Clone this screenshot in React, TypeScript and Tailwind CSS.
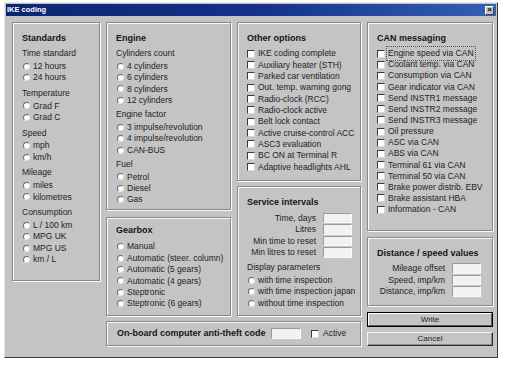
import React from 'react';

const font = "font-['Liberation_Sans',Arial,sans-serif]";

const GroupBox: React.FC<{ className?: string; title?: string; children?: React.ReactNode }> = ({ className = '', title, children }) => (
  <div className={`border border-[#8a8a8a] shadow-[inset_1px_1px_0_#fafafa,1px_1px_0_#fafafa] pl-[9px] ${className}`}>
    {title && <div className="font-bold text-[9px] leading-[11.5px] text-[#151515] mb-[3.5px]">{title}</div>}
    {children}
  </div>
);

const Radio: React.FC<{ label: string }> = ({ label }) => (
  <div className="flex items-center h-[11.4px] whitespace-nowrap">
    <span className="ml-[1px] w-[7px] h-[7px] rounded-full bg-white border border-t-[#6a6a6a] border-l-[#6a6a6a] border-r-[#e4e4e4] border-b-[#e4e4e4]" />
    <span className="ml-[3px]">{label}</span>
  </div>
);

const Check: React.FC<{ label: string; focus?: boolean; h: string }> = ({ label, focus, h }) => (
  <div className={`flex items-center ${h} whitespace-nowrap`}>
    <span className="w-[8px] h-[8px] bg-white border border-t-[#3a3a3a] border-l-[#3a3a3a] border-r-[#d8d8d8] border-b-[#d8d8d8]" />
    <span className={focus ? 'ml-[2px] px-[1px] outline outline-1 outline-dotted outline-[#555]' : 'ml-[3px]'}>{label}</span>
  </div>
);

const Label: React.FC<{ text: string; mt?: string }> = ({ text, mt = '' }) => (
  <div className={`h-[11.5px] leading-[11.5px] mb-[1px] whitespace-nowrap ${mt}`}>{text}</div>
);

const Input: React.FC<{ className?: string }> = ({ className = '' }) => (
  <span className={`block bg-[#f2f2f2] border border-t-[#9a9a9a] border-l-[#9a9a9a] border-r-[#fafafa] border-b-[#fafafa] ${className}`} />
);

const Field: React.FC<{ label: string; w: string }> = ({ label, w }) => (
  <div className="flex items-center h-[11.4px] whitespace-nowrap">
    <span className={`${w} text-right`}>{label}</span>
    <Input className="ml-[7px] w-[29px] h-[10.5px]" />
  </div>
);

const otherOptions = [
  'IKE coding complete',
  'Auxiliary heater (STH)',
  'Parked car ventilation',
  'Out. temp. warning gong',
  'Radio-clock (RCC)',
  'Radio-clock active',
  'Belt lock contact',
  'Active cruise-control ACC',
  'ASC3 evaluation',
  'BC ON at Terminal R',
  'Adaptive headlights AHL',
];

const canItems = [
  'Engine speed via CAN',
  'Coolant temp. via CAN',
  'Consumption via CAN',
  'Gear indicator via CAN',
  'Send INSTR1 message',
  'Send INSTR2 message',
  'Send INSTR3 message',
  'Oil pressure',
  'ASC via CAN',
  'ABS via CAN',
  'Terminal 61 via CAN',
  'Terminal 50 via CAN',
  'Brake power distrib. EBV',
  'Brake assistant HBA',
  'Information - CAN',
];

export default function App() {
  return (
    <div className={`w-[512px] h-[365px] bg-white overflow-hidden ${font} text-[8.5px] text-[#1e1e1e]`}>
      <div className="ml-[4px] mt-[2px] w-[494px] h-[356px] bg-[#c4c4c4] border border-t-[#e6e6e6] border-l-[#e6e6e6] border-r-[#3c3c3c] border-b-[#3c3c3c] p-[1px]">
        {/* title bar */}
        <div className="h-[12px] flex items-center justify-between bg-gradient-to-r from-[#0b2670] via-[#14308a] to-[#3560b0] pl-[1px] pr-[2px]">
          <span className="text-white font-bold text-[7.5px] leading-none">IKE coding</span>
          <span className="w-[9px] h-[9px] bg-[#c4c4c4] border border-t-white border-l-white border-r-[#404040] border-b-[#404040] flex items-center justify-center text-[8px] leading-none font-bold text-black">×</span>
        </div>

        <div className="flex gap-[6px] pl-[6px] pt-[6px]">
          {/* column 1 */}
          <GroupBox title="Standards" className="w-[88px] h-[259px] pt-[10px]">
            <Label text="Time standard" />
            <Radio label="12 hours" />
            <Radio label="24 hours" />
            <Label text="Temperature" mt="mt-[4.5px]" />
            <Radio label="Grad F" />
            <Radio label="Grad C" />
            <Label text="Speed" mt="mt-[4.5px]" />
            <Radio label="mph" />
            <Radio label="km/h" />
            <Label text="Mileage" mt="mt-[4.5px]" />
            <Radio label="miles" />
            <Radio label="kilometres" />
            <Label text="Consumption" mt="mt-[4.5px]" />
            <Radio label="L / 100 km" />
            <Radio label="MPG UK" />
            <Radio label="MPG US" />
            <Radio label="km / L" />
          </GroupBox>

          {/* middle */}
          <div className="w-[255px] flex flex-col gap-[5px]">
            <div className="flex gap-[6px]">
              <div className="w-[125px] flex flex-col gap-[7px]">
                <GroupBox title="Engine" className="h-[188px] pt-[10px]">
                  <Label text="Cylinders count" />
                  <Radio label="4 cylinders" />
                  <Radio label="6 cylinders" />
                  <Radio label="8 cylinders" />
                  <Radio label="12 cylinders" />
                  <Label text="Engine factor" mt="mt-[3px]" />
                  <Radio label="3 impulse/revolution" />
                  <Radio label="4 impulse/revolution" />
                  <Radio label="CAN-BUS" />
                  <Label text="Fuel" mt="mt-[3px]" />
                  <Radio label="Petrol" />
                  <Radio label="Diesel" />
                  <Radio label="Gas" />
                </GroupBox>
                <GroupBox title="Gearbox" className="h-[99px] pt-[7px]">
                  <div className="h-[1px]" />
                  <Radio label="Manual" />
                  <Radio label="Automatic (steer. column)" />
                  <Radio label="Automatic (5 gears)" />
                  <Radio label="Automatic (4 gears)" />
                  <Radio label="Steptronic" />
                  <Radio label="Steptronic (6 gears)" />
                </GroupBox>
              </div>
              <div className="w-[124px] flex flex-col gap-[5px]">
                <GroupBox title="Other options" className="h-[159px] pt-[10px]">
                  {otherOptions.map((t) => (
                    <Check key={t} label={t} h="h-[11.35px]" />
                  ))}
                </GroupBox>
                <GroupBox title="Service intervals" className="h-[130px] pt-[10px]">
                  <div className="h-[0.5px]" />
                  <Field label="Time, days" w="w-[69px]" />
                  <Field label="Litres" w="w-[69px]" />
                  <Field label="Min time to reset" w="w-[69px]" />
                  <Field label="Min litres to reset" w="w-[69px]" />
                  <div className="h-[11.5px] leading-[11.5px] mt-[3.5px] mb-[1.5px]">Display parameters</div>
                  <Radio label="with time inspection" />
                  <Radio label="with time inspection japan" />
                  <Radio label="without time inspection" />
                </GroupBox>
              </div>
            </div>
            <div className="h-[25px] flex items-center border border-[#8a8a8a] shadow-[inset_1px_1px_0_#fafafa,1px_1px_0_#fafafa] pl-[10px]">
              <span className="w-[154px] font-bold text-[9px] text-[#151515] whitespace-nowrap">On-board computer anti-theft code</span>
              <Input className="w-[30px] h-[10.5px]" />
              <span className="ml-[10px] w-[8px] h-[8px] bg-white border border-t-[#3a3a3a] border-l-[#3a3a3a] border-r-[#d8d8d8] border-b-[#d8d8d8]" />
              <span className="ml-[4px]">Active</span>
            </div>
          </div>

          {/* column 4 */}
          <div className="w-[126px] flex flex-col">
            <GroupBox title="CAN messaging" className="h-[209px] pt-[10px]">
              {canItems.map((t, i) => (
                <Check key={t} label={t} focus={i === 0} h="h-[11.15px]" />
              ))}
            </GroupBox>
            <GroupBox title="Distance / speed values" className="h-[69px] mt-[6px] pt-[10px]">
              <Field label="Mileage offset" w="w-[68px]" />
              <Field label="Speed, imp/km" w="w-[68px]" />
              <Field label="Distance, imp/km" w="w-[68px]" />
            </GroupBox>
            <button className="mt-[6px] h-[15px] w-[126px] border border-black bg-[#c4c4c4] p-0 flex">
              <span className="flex-1 flex items-center justify-center border border-t-white border-l-white border-r-[#5a5a5a] border-b-[#5a5a5a] text-[8px] text-[#222]">Write</span>
            </button>
            <button className="mt-[5px] h-[14px] w-[126px] bg-[#c4c4c4] border border-t-[#f4f4f4] border-l-[#f4f4f4] border-r-[#2a2a2a] border-b-[#2a2a2a] shadow-[inset_-1px_-1px_0_#8a8a8a] flex items-center justify-center text-[8px] text-[#222]">
              Cancel
            </button>
          </div>
        </div>
      </div>
    </div>
  );
}
